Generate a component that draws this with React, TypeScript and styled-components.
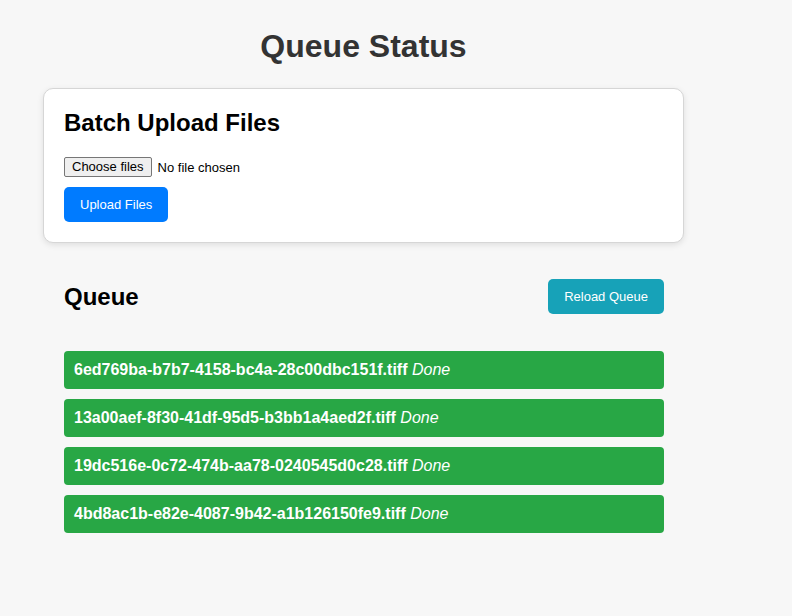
import React from 'react';
import styled, {createGlobalStyle} from 'styled-components';

const files = [
    '6ed769ba-b7b7-4158-bc4a-28c00dbc151f.tiff',
    '13a00aef-8f30-41df-95d5-b3bb1a4aed2f.tiff',
    '19dc516e-0c72-474b-aa78-0240545d0c28.tiff',
    '4bd8ac1b-e82e-4087-9b42-a1b126150fe9.tiff',
];

const App = () => {
    return (
        <>
            <GlobalStyle/>
            <Page>
                <Title>Queue Status</Title>
                <Card>
                    <Heading>Batch Upload Files</Heading>
                    <FileRow>
                        <ChooseButton>
                            Choose files
                            <HiddenInput type="file" multiple/>
                        </ChooseButton>
                        <FileName>No file chosen</FileName>
                    </FileRow>
                    <Button color="#007bff">Upload Files</Button>
                </Card>
                <QueueSection>
                    <QueueHeader>
                        <Heading>Queue</Heading>
                        <Button color="#17a2b8">Reload Queue</Button>
                    </QueueHeader>
                    <QueueList>
                        {files.map(name => (
                            <QueueItem key={name}>
                                {name} <Status>Done</Status>
                            </QueueItem>
                        ))}
                    </QueueList>
                </QueueSection>
            </Page>
        </>
    )
}

export default App;

const GlobalStyle = createGlobalStyle`
  body {
    margin: 0;
    background-color: #f7f7f7;
    font-family: "Liberation Sans", Arial, sans-serif;
  }
`;

const Page = styled.div`
  width: 641px;
  margin-left: 43px;
  padding-top: 28px;
`;

const Title = styled.h1`
  margin: 0 0 23px;
  font-size: 32px;
  line-height: 37px;
  text-align: center;
  color: #333;
`;

const Card = styled.div`
  display: flex;
  flex-direction: column;
  align-items: flex-start;
  background: #fff;
  border: 1px solid #d6d6d6;
  border-radius: 10px;
  padding: 20px;
  box-shadow: 0 2px 6px rgba(0, 0, 0, 0.1);
`;

const Heading = styled.h2`
  margin: 0;
  font-size: 24px;
  line-height: 27px;
  color: #000;
`;

const FileRow = styled.div`
  display: flex;
  align-items: center;
  gap: 6px;
  margin: 21px 0 10px;
  font-size: 13px;
`;

const ChooseButton = styled.label`
  position: relative;
  background: #efefef;
  border: 1px solid #767676;
  border-radius: 2px;
  padding: 1px 7px;
  line-height: 16px;
  color: #000;
`;

const HiddenInput = styled.input`
  display: none;
`;

const FileName = styled.span`
  color: #000;
`;

const Button = styled.button<{color: string}>`
  background: ${props => props.color};
  color: #fff;
  border: none;
  border-radius: 5px;
  padding: 10px 16px;
  font-family: "Liberation Sans", Arial, sans-serif;
  font-size: 13px;
  line-height: 15px;
  cursor: pointer;
`;

const QueueSection = styled.div`
  margin-top: 36px;
  padding: 0 20px 0 21px;
`;

const QueueHeader = styled.div`
  display: flex;
  justify-content: space-between;
  align-items: center;
  margin-bottom: 37px;
`;

const QueueList = styled.div`
  display: flex;
  flex-direction: column;
  gap: 10px;
`;

const QueueItem = styled.div`
  background: #28a745;
  color: #fff;
  border-radius: 4px;
  padding: 10px;
  font-size: 16px;
  line-height: 18px;
  font-weight: bold;
`;

const Status = styled.em`
  font-weight: normal;
`;
